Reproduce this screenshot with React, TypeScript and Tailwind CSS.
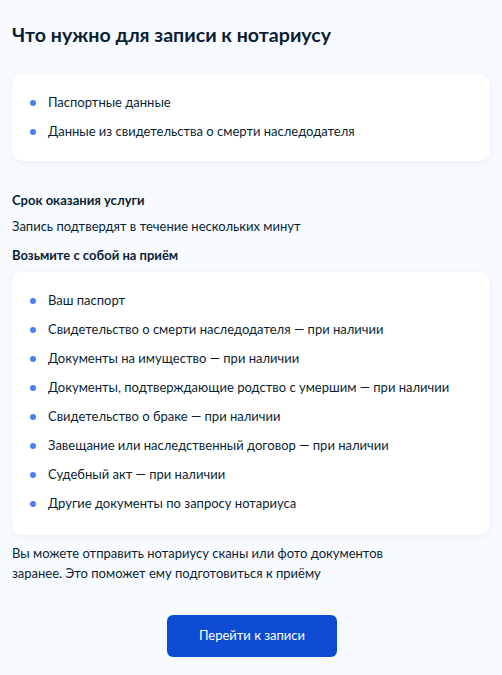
import React from 'react';

const required = ['Паспортные данные', 'Данные из свидетельства о смерти наследодателя'];

const bring = [
    'Ваш паспорт',
    'Свидетельство о смерти наследодателя — при наличии',
    'Документы на имущество — при наличии',
    'Документы, подтверждающие родство с умершим — при наличии',
    'Свидетельство о браке — при наличии',
    'Завещание или наследственный договор — при наличии',
    'Судебный акт — при наличии',
    'Другие документы по запросу нотариуса',
];

const BulletList: React.FC<{ items: string[] }> = ({ items }) => (
    <ul className="flex flex-col gap-[11px]">
        {items.map(t => (
            <li key={t} className="flex items-center h-[18px]">
                <span className="w-[6px] h-[6px] rounded-full bg-[#4c7ff0] ml-[18px] mr-[12px] shrink-0" />
                <span className="text-[13px] text-[#0b1f33]">{t}</span>
            </li>
        ))}
    </ul>
);

const App: React.FC = () => {
    return (
        <div className="min-h-[675px] bg-[#f7faff] px-[12px] pt-[21px] pb-[18px] text-[#0b1f33] font-['Lato','Noto_Sans',sans-serif]">
            <h1 className="text-[19.6px] font-bold leading-[28px]">Что нужно для записи к нотариусу</h1>

            <div className="mt-[25px] bg-white rounded-[10px] shadow-[0_2px_8px_rgba(11,31,51,0.05)] pt-[20px] pb-[20px]">
                <BulletList items={required} />
            </div>

            <div className="mt-[30px] text-[13px] font-bold leading-[18px]">Срок оказания услуги</div>
            <div className="mt-[8px] text-[13px] leading-[18px]">Запись подтвердят в течение нескольких минут</div>
            <div className="mt-[11px] text-[13px] font-bold leading-[18px]">Возьмите с собой на приём</div>

            <div className="mt-[8px] bg-white rounded-[10px] shadow-[0_2px_8px_rgba(11,31,51,0.05)] pt-[20px] pb-[22px]">
                <BulletList items={bring} />
            </div>

            <p className="mt-[8px] text-[13px] leading-[20px] max-w-[400px]">
                Вы можете отправить нотариусу сканы или фото документов заранее. Это поможет ему подготовиться к приёму
            </p>

            <div className="flex justify-center mt-[32px]">
                <button className="ml-[2px] w-[170px] h-[42px] rounded-[6px] bg-[#0d4cd3] text-white text-[13px]">
                    Перейти к записи
                </button>
            </div>
        </div>
    );
};

export default App;
